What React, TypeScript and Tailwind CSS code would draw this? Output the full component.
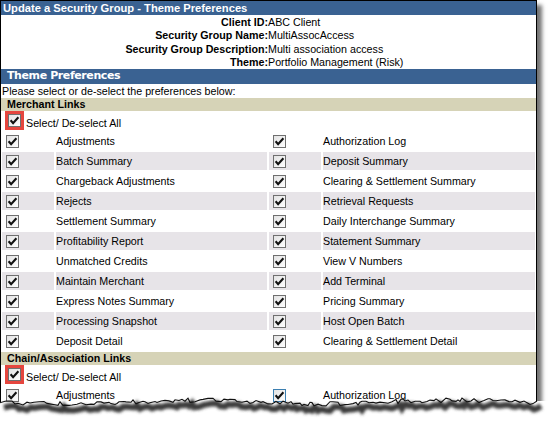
import React from "react";

const merchantRows = [
  ["Adjustments", "Authorization Log"],
  ["Batch Summary", "Deposit Summary"],
  ["Chargeback Adjustments", "Clearing & Settlement Summary"],
  ["Rejects", "Retrieval Requests"],
  ["Settlement Summary", "Daily Interchange Summary"],
  ["Profitability Report", "Statement Summary"],
  ["Unmatched Credits", "View V Numbers"],
  ["Maintain Merchant", "Add Terminal"],
  ["Express Notes Summary", "Pricing Summary"],
  ["Processing Snapshot", "Host Open Batch"],
  ["Deposit Detail", "Clearing & Settlement Detail"],
];

const info = [
  ["Client ID:", "ABC Client"],
  ["Security Group Name:", "MultiAssocAccess"],
  ["Security Group Description:", "Multi association access"],
  ["Theme:", "Portfolio Management (Risk)"],
];

function CheckBox({ hover = false }: { hover?: boolean }) {
  return (
    <svg width="13" height="13" viewBox="0 0 13 13" className="shrink-0">
      <defs>
        <linearGradient id="cbfill" x1="0" y1="0" x2="1" y2="1">
          <stop offset="0" stopColor="#e2e2e2" />
          <stop offset="1" stopColor="#ffffff" />
        </linearGradient>
      </defs>
      <rect
        x="0.5"
        y="0.5"
        width="12"
        height="12"
        fill="url(#cbfill)"
        stroke={hover ? "#3c7fb1" : "#6f6f6f"}
      />
      <polyline
        points="2.6,6.3 5.1,9.2 10.4,3.2"
        fill="none"
        stroke="#111"
        strokeWidth="2.1"
      />
    </svg>
  );
}

function SelectAll() {
  return (
    <div className="flex h-[19px] items-center pl-[4px]">
      <div className="flex h-[19px] w-[19px] items-center justify-center border-[3px] border-[#e5463e]">
        <CheckBox />
      </div>
      <span className="ml-[2px] mt-[6px] text-black">Select/ De-select All</span>
    </div>
  );
}

function LinkRow({
  left,
  right,
  shaded,
  rightHover = false,
}: {
  left: string;
  right: string;
  shaded: boolean;
  rightHover?: boolean;
}) {
  const bg = shaded ? "bg-[#e7e4e8]" : "bg-white";
  return (
    <div className="mt-[2px] flex h-[18px] gap-[2px] pl-[1px]">
      <div className={`flex w-[52px] items-center pl-[4px] ${bg}`}>
        <CheckBox />
      </div>
      <div className={`flex w-[211px] items-center ${bg}`}>{left}</div>
      <div className={`flex w-[52px] items-center pl-[4px] ${bg}`}>
        <CheckBox hover={rightHover} />
      </div>
      <div className={`flex w-[212px] items-center ${bg}`}>{right}</div>
    </div>
  );
}

function SectionBar({ title }: { title: string }) {
  return (
    <div className="flex h-[13px] items-center bg-[#d6d3b7] pl-[6px] font-bold">
      {title}
    </div>
  );
}

function TornEdge() {
  let seed = 11;
  const rnd = () => {
    seed = (seed * 9301 + 49297) % 233280;
    return seed / 233280;
  };
  const pts: [number, number][] = [];
  let x = 0;
  while (x < 537) {
    const y = 12 + (rnd() - 0.5) * 4.5 + Math.sin(x / 41) * 1.8;
    pts.push([x, y]);
    x += 2 + Math.floor(rnd() * 4);
  }
  pts.push([537, 11]);
  const line = pts.map((p, i) => `${i ? "L" : "M"}${p[0]},${p[1].toFixed(1)}`).join(" ");
  const cover = `${line} L552,11 L552,33 L0,33 Z`;
  return (
    <svg
      width="552"
      height="33"
      viewBox="0 0 552 33"
      className="pointer-events-none absolute left-0 top-[390px]"
    >
      <defs>
        <filter id="tearblur" x="-5%" y="-100%" width="110%" height="300%">
          <feGaussianBlur stdDeviation="1.8" />
        </filter>
      </defs>
      <path d={cover} fill="#fff" />
      <path
        d={line}
        transform="translate(4,5)"
        fill="none"
        stroke="#3a3a3a"
        strokeWidth="6"
        filter="url(#tearblur)"
      />
      <path d={line} fill="none" stroke="#111" strokeWidth="1.1" />
    </svg>
  );
}

export default function App() {
  return (
    <div className="relative h-[423px] w-[552px] overflow-hidden bg-white font-['Liberation_Sans',Arial,sans-serif] text-[10.7px] text-black">
      <div className="h-[412px] w-[537px] overflow-hidden border-l border-r border-t border-black bg-white shadow-[5px_5px_4px_rgba(0,0,0,0.55)]">
        {/* Page title */}
        <div className="flex h-[14px] items-center bg-[#3a6292] pl-[2px] text-[11.2px] font-bold text-white">
          Update a Security Group - Theme Preferences
        </div>

        {/* Group details */}
        <div className="grid grid-cols-[267px_1fr] pt-[1px]">
          {info.map(([label, value]) => (
            <React.Fragment key={label}>
              <div className="h-[13.25px] text-right font-bold leading-[13.25px]">{label}</div>
              <div className="h-[13.25px] leading-[13.25px]">{value}</div>
            </React.Fragment>
          ))}
        </div>

        <div className="flex h-[15px] items-center bg-[#3a6292] pl-[6px] font-['DejaVu_Sans',Verdana,sans-serif] text-[11px] font-bold tracking-[-0.4px] text-white">
          Theme Preferences
        </div>
        <div className="flex h-[14px] items-center pl-[1px]">
          Please select or de-select the preferences below:
        </div>

        <SectionBar title="Merchant Links" />
        <SelectAll />
        {merchantRows.map(([l, r], i) => (
          <LinkRow key={l} left={l} right={r} shaded={i % 2 === 1} />
        ))}

        <div className="mt-[2px]">
          <SectionBar title="Chain/Association Links" />
        </div>
        <SelectAll />
        <LinkRow left="Adjustments" right="Authorization Log" shaded={false} rightHover />
      </div>
      <TornEdge />
    </div>
  );
}
